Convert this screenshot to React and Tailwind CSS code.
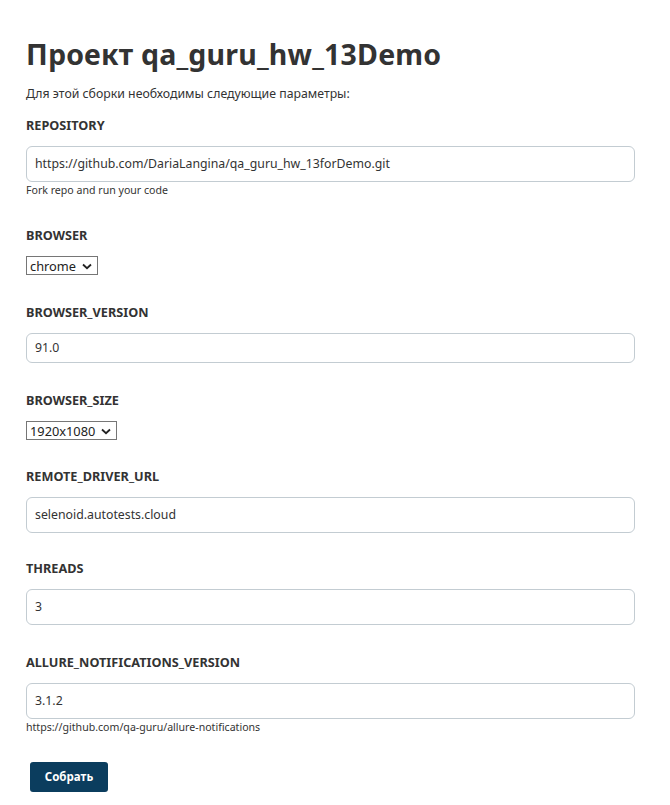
import React from "react";

const font = { fontFamily: '"Noto Sans", "Open Sans", sans-serif' };

function Chevron() {
  return (
    <svg width="10" height="7" viewBox="0 0 10 7" className="ml-[6px] mt-[1px]">
      <path d="M1 1.5 L5 5.2 L9 1.5" fill="none" stroke="#222" strokeWidth="1.8" />
    </svg>
  );
}

function Label({ children }) {
  return (
    <div className="h-[20px] leading-[20px] text-[12.7px] font-bold text-[#333] mb-[11px]">
      {children}
    </div>
  );
}

function TextInput({ value, h = "h-[36px]" }) {
  return (
    <div
      className={`${h} w-[609px] rounded-[6px] border border-[#c3ccd2] bg-white flex items-center pl-[8px] text-[12.3px] text-[#333]`}
    >
      {value}
    </div>
  );
}

function Select({ value }) {
  return (
    <div className="flex w-fit h-[19px] items-center border border-[#767676] pl-[3px] pr-[5px] text-[12.8px] leading-[16px] text-[#222]">
      {value}
      <Chevron />
    </div>
  );
}

function Help({ children }) {
  return <div className="h-[16px] leading-[16px] text-[10.6px] text-[#333]">{children}</div>;
}

export default function App() {
  return (
    <div className="min-h-[805px] bg-white pl-[26px] pt-[35px]" style={font}>
      <h1 className="text-[28.5px] leading-[38px] font-bold text-[#333] tracking-[0.2px]">
        Проект qa_guru_hw_13Demo
      </h1>
      <p className="mt-[11px] text-[12.3px] leading-[20px] text-[#333]">
        Для этой сборки необходимы следующие параметры:
      </p>
      <div className="mt-[11px]">
        <Label>REPOSITORY</Label>
        <TextInput value="https://github.com/DariaLangina/qa_guru_hw_13forDemo.git" />
        <Help>Fork repo and run your code</Help>
      </div>
      <div className="mt-[27px]">
        <Label>BROWSER</Label>
        <Select value="chrome" />
      </div>
      <div className="mt-[27px]">
        <Label>BROWSER_VERSION</Label>
        <TextInput value="91.0" h="h-[30px]" />
      </div>
      <div className="mt-[27px]">
        <Label>BROWSER_SIZE</Label>
        <Select value="1920x1080" />
      </div>
      <div className="mt-[26px]">
        <Label>REMOTE_DRIVER_URL</Label>
        <TextInput value="selenoid.autotests.cloud" />
      </div>
      <div className="mt-[25px]">
        <Label>THREADS</Label>
        <TextInput value="3" />
      </div>
      <div className="mt-[27px]">
        <Label>ALLURE_NOTIFICATIONS_VERSION</Label>
        <TextInput value="3.1.2" />
        <Help>https://github.com/qa-guru/allure-notifications</Help>
      </div>
      <button className="block mt-[27px] ml-[4px] h-[30px] w-[78px] rounded-[3px] bg-[#0b3d5e] text-[11.5px] font-bold text-white">
        Собрать
      </button>
    </div>
  );
}
